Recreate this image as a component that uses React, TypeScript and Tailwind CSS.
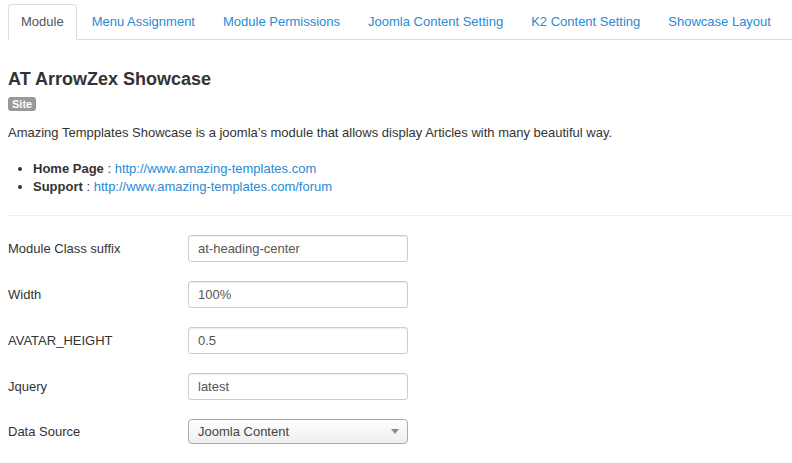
const TABS = [
  "Module",
  "Menu Assignment",
  "Module Permissions",
  "Joomla Content Setting",
  "K2 Content Setting",
  "Showcase Layout",
];

const FIELDS = [
  { label: "Module Class suffix", value: "at-heading-center" },
  { label: "Width", value: "100%" },
  { label: "AVATAR_HEIGHT", value: "0.5" },
  { label: "Jquery", value: "latest" },
];

export default function App() {
  return (
    <div className="min-h-[463px] bg-white pl-2 pt-1 text-[13px] leading-[18px] text-[#333] font-['Liberation_Sans',Arial,sans-serif]">
      {/* Tab strip */}
      <ul className="flex whitespace-nowrap border-b border-[#ddd]">
        {TABS.map((tab, idx) => (
          <li key={tab} className="-mb-px mr-[2px] shrink-0">
            {idx === 0 ? (
              <span className="block rounded-t-[4px] border border-[#ddd] border-b-white bg-white px-[12px] py-[8px] text-[#555]">
                {tab}
              </span>
            ) : (
              <span className="block border border-transparent px-[12px] py-[8px] text-[#2a8ad4]">
                {tab}
              </span>
            )}
          </li>
        ))}
      </ul>

      {/* Module info */}
      <h2 className="mt-[28px] text-[18px] font-bold leading-[22px] text-[#333]">
        AT ArrowZex Showcase
      </h2>
      <span className="mt-[7px] inline-block rounded-[3px] bg-[#999] px-[4px] text-[11px] font-bold leading-[14px] text-white">
        Site
      </span>
      <p className="mt-[11px]">
        Amazing Tempplates Showcase is a joomla’s module that allows display Articles with many beautiful way.
      </p>
      <ul className="mt-[18px] list-disc pl-[25px]">
        <li>
          <b>Home Page</b> : <span className="text-[#2a8ad4]">http://www.amazing-templates.com</span>
        </li>
        <li>
          <b>Support</b> : <span className="text-[#2a8ad4]">http://www.amazing-templates.com/forum</span>
        </li>
      </ul>
      <hr className="mt-[19px] border-t border-[#eee]" />

      {/* Settings form */}
      <div className="mt-[19px] flex flex-col gap-[19px]">
        {FIELDS.map((f) => (
          <div key={f.label} className="flex items-center">
            <label className="w-[180px]">{f.label}</label>
            <div className="flex h-[27px] w-[220px] items-center rounded-[3px] border border-[#ccc] px-[9px] text-[#555] shadow-[inset_0_1px_1px_rgba(0,0,0,0.075)]">
              {f.value}
            </div>
          </div>
        ))}
        <div className="flex items-center">
          <label className="w-[180px]">Data Source</label>
          <div className="flex h-[25px] w-[220px] items-center justify-between rounded-[4px] border border-[#aaa] bg-gradient-to-b from-white to-[#eee] pl-[9px] pr-[8px] text-[#444]">
            <span>Joomla Content</span>
            <svg width="8" height="5" viewBox="0 0 8 5">
              <path d="M0 0 L8 0 L4 5 Z" fill="#888" />
            </svg>
          </div>
        </div>
      </div>
    </div>
  );
}
